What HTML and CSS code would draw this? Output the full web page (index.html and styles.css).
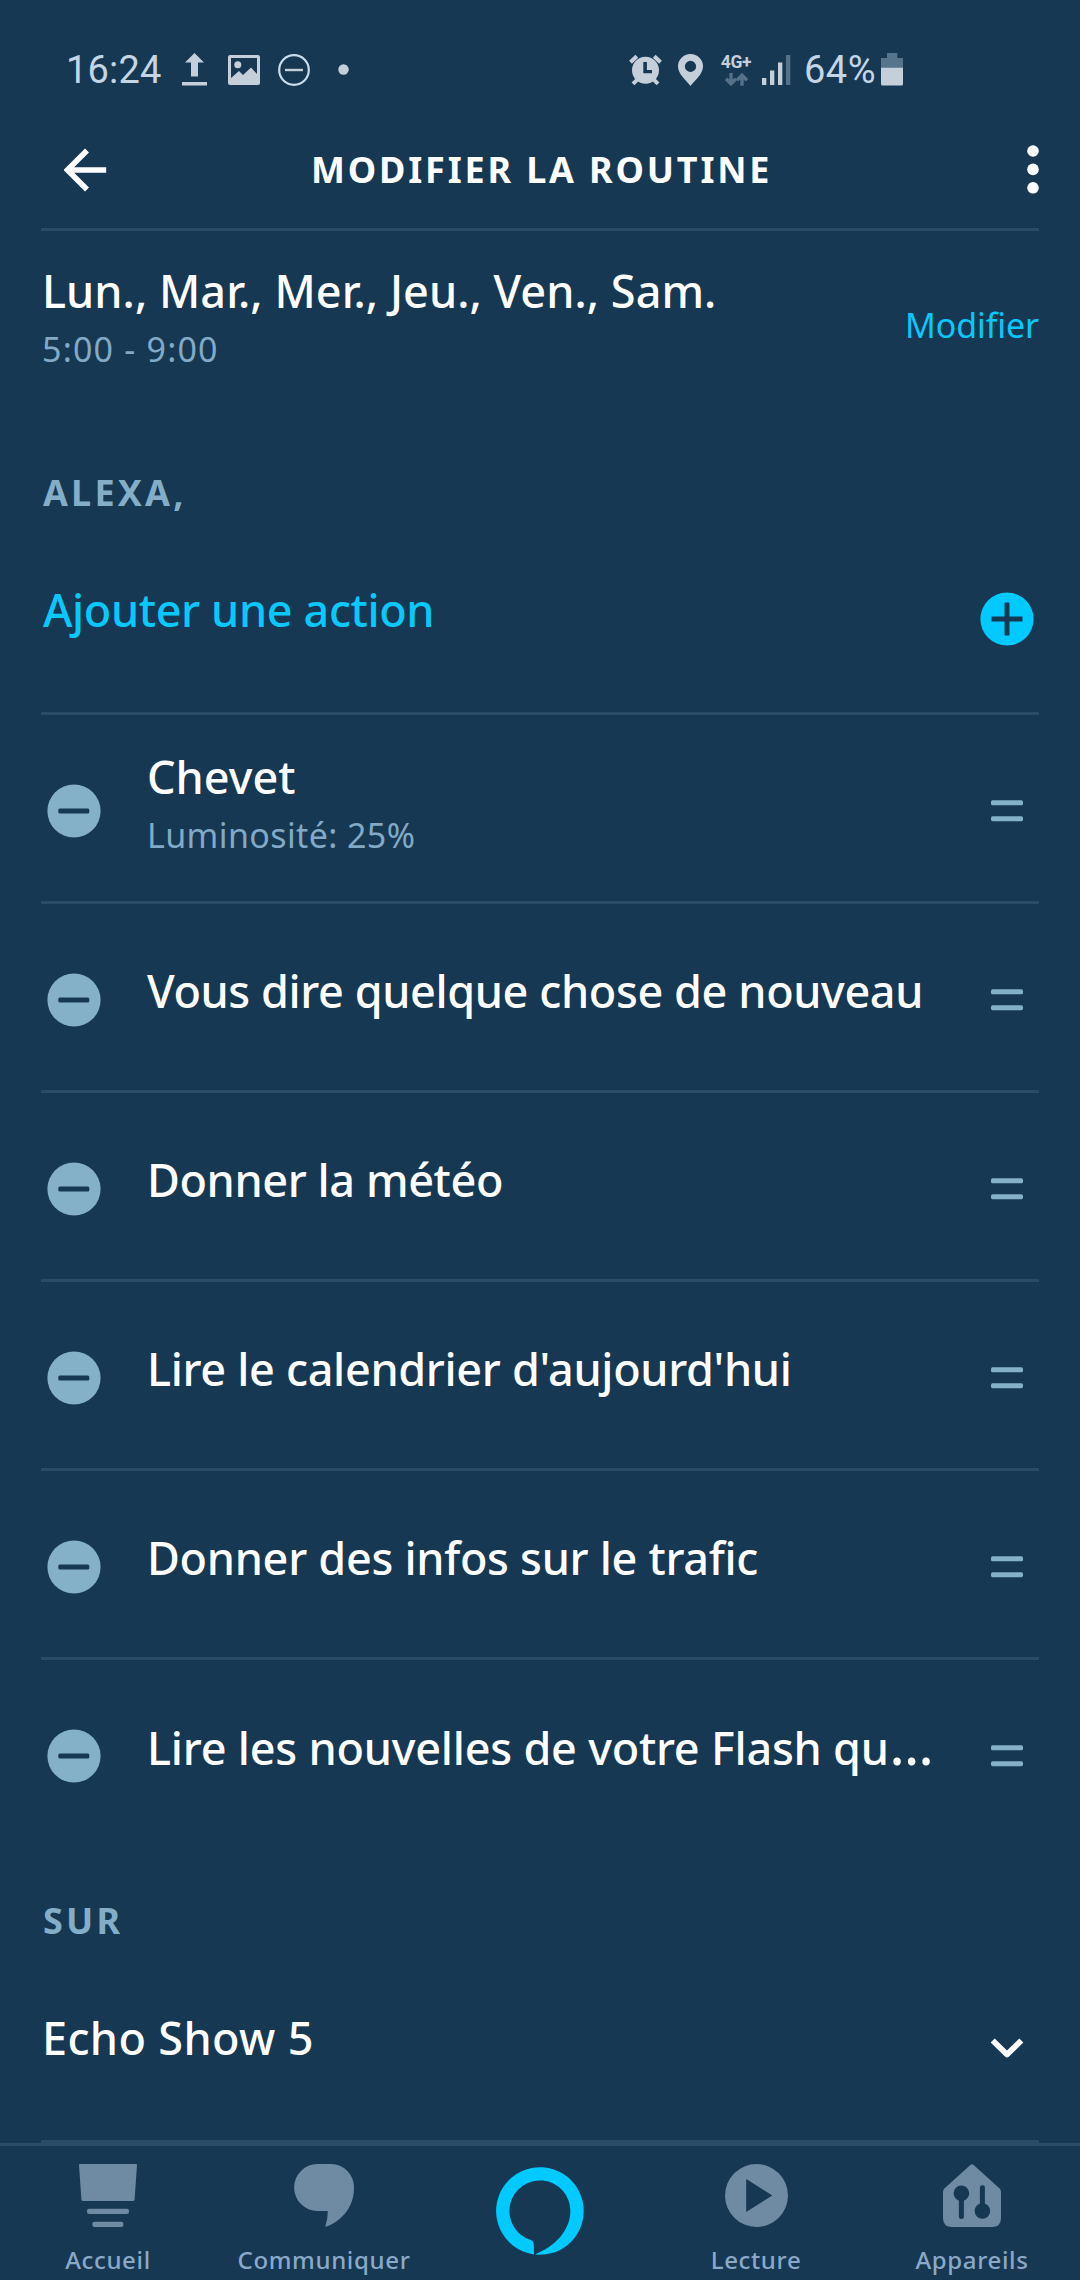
FILE: index.html
```html
<!DOCTYPE html>
<html lang="fr">
<head>
<meta charset="utf-8">
<title>Modifier la routine</title>
<link rel="stylesheet" href="styles.css">
</head>
<body>
<svg class="defs" width="0" height="0" aria-hidden="true">
  <symbol id="minus" viewBox="0 0 54 54">
    <circle cx="27" cy="27" r="26.6" fill="#84b0c8"/>
    <rect x="11.3" y="24.4" width="31" height="5.2" rx="1.5" fill="#173852"/>
  </symbol>
  <symbol id="drag" viewBox="0 0 32 22">
    <rect x="0" y="0.3" width="32" height="5" rx="1.6" fill="#84b0c8"/>
    <rect x="0" y="16.2" width="32" height="5" rx="1.6" fill="#84b0c8"/>
  </symbol>
</svg>
<div class="screen">
  <div class="status">
    <div class="status-left">
      <span class="clock">16:24</span>
      <svg class="i-upload" width="25" height="33" viewBox="0 0 25 33"><path d="M12.5 0 22 9.5H16V23.5H9V9.5H3Z M0 29h25v3.6H0Z"/></svg>
      <svg class="i-image" width="32" height="30" viewBox="0 0 32 30"><path fill-rule="evenodd" d="M2 0H30Q32 0 32 2V28Q32 30 30 30H2Q0 30 0 28V2Q0 0 2 0ZM3 3V23L11 16 15 20 23 12.5 29 19V3Z"/><circle cx="9.8" cy="9.7" r="3.5"/></svg>
      <svg class="i-dnd" width="32" height="32" viewBox="0 0 32 32"><circle cx="16" cy="16" r="14.8" fill="none" stroke="#c9dcec" stroke-width="2.2"/><path d="M7 14.8H25V17.2H7Z"/></svg>
      <svg class="i-dot" width="11" height="11" viewBox="0 0 11 11"><circle cx="5.5" cy="5.5" r="5.2"/></svg>
    </div>
    <div class="status-right">
      <svg width="33" height="32" viewBox="0 0 33 32"><path fill-rule="evenodd" d="M16.5 2.8A13.5 13.5 0 1 1 16.5 29.8 13.5 13.5 0 1 1 16.5 2.8ZM14.3 8V19.2H23V15.9H17.9V8Z"/><path d="M1.5 8.3 7.8 2.2M31.5 8.3 25.2 2.2M4 29.8 8 25.8M29 29.8 25 25.8" stroke="#c5cfda" stroke-width="4" fill="none"/></svg>
      <svg class="i-pin" width="25" height="32" viewBox="0 0 25 32"><path fill-rule="evenodd" d="M12.5 0A12.5 12.3 0 0 1 25 12.5C25 20 17 26 12.5 32 8 26 0 20 0 12.5A12.5 12.3 0 0 1 12.5 0ZM12.5 6.8A5.6 5.6 0 1 0 12.5 18 5.6 5.6 0 1 0 12.5 6.8Z"/></svg>
      <div class="net">
        <span class="net-label">4G+</span>
        <svg width="23" height="13" viewBox="0 0 23 13" fill="none"><g stroke="#56718a" stroke-width="3.4"><path d="M6 0V10.5M1 5.8 6 10.8 11 5.8"/><path d="M17 12.8V2M12 7.2 17 2.2 22 7.2"/></g></svg>
      </div>
      <svg class="i-signal" width="29" height="30" viewBox="0 0 29 30"><path d="M0 23H4.3V30H0ZM8 15.5H12.3V30H8ZM16 7.5H20.3V30H16Z"/><path d="M24 0H28.3V30H24Z" fill="#56718a"/></svg>
      <span class="percent">64%</span>
      <svg class="i-battery" width="22" height="33" viewBox="0 0 22 33"><path d="M6 0H16.3V5H22V15H0V5H6Z" fill="#56758c"/><path d="M0 14.8H22V31Q22 32.6 20.4 32.6H1.6Q0 32.6 0 31Z"/></svg>
    </div>
  </div>
  <header class="header">
    <svg class="back" width="44" height="44" viewBox="0 0 44 44"><path d="M42.2 22H4M23 2.6 3.4 22 23 41.4" fill="none" stroke="#fff" stroke-width="5.6"/></svg>
    <h1 class="title">MODIFIER LA ROUTINE</h1>
    <svg class="more" width="12" height="49" viewBox="0 0 12 49" fill="#fff"><circle cx="6" cy="6" r="5.8"/><circle cx="6" cy="24.4" r="5.8"/><circle cx="6" cy="42.8" r="5.8"/></svg>
  </header>
  <main class="content">
    <section class="schedule">
      <div>
        <div class="primary days">Lun., Mar., Mer., Jeu., Ven., Sam.</div>
        <div class="secondary hours">5:00 - 9:00</div>
      </div>
      <a class="edit">Modifier</a>
    </section>
    <h2 class="section">ALEXA,</h2>
    <div class="add">
      <span class="primary add-label">Ajouter une action</span>
      <svg class="plus" width="54" height="54" viewBox="0 0 54 54"><circle cx="27" cy="27" r="26.6" fill="#00caff"/><path d="M11.5 24.5h13v-13q0-1 1-1h3q1 0 1 1v13h13v5h-13v13q0 1-1 1h-3q-1 0-1-1v-13h-13Z" fill="#173852"/></svg>
    </div>
    <ul class="actions">
      <li class="action"><svg class="minus"><use href="#minus"/></svg><div class="text double"><div class="primary device-action">Chevet</div><div class="secondary">Luminosité: 25%</div></div><svg class="drag"><use href="#drag"/></svg></li>
      <li class="action"><svg class="minus"><use href="#minus"/></svg><div class="text primary">Vous dire quelque chose de nouveau</div><svg class="drag"><use href="#drag"/></svg></li>
      <li class="action"><svg class="minus"><use href="#minus"/></svg><div class="text primary">Donner la météo</div><svg class="drag"><use href="#drag"/></svg></li>
      <li class="action"><svg class="minus"><use href="#minus"/></svg><div class="text primary calendar">Lire le calendrier d'aujourd'hui</div><svg class="drag"><use href="#drag"/></svg></li>
      <li class="action"><svg class="minus"><use href="#minus"/></svg><div class="text primary traffic">Donner des infos sur le trafic</div><svg class="drag"><use href="#drag"/></svg></li>
      <li class="action"><svg class="minus"><use href="#minus"/></svg><div class="text primary news">Lire les nouvelles de votre Flash qu<span class="ellipsis">…</span></div><svg class="drag"><use href="#drag"/></svg></li>
    </ul>
    <h2 class="section device-heading">SUR</h2>
    <div class="device">
      <span class="primary device-name">Echo Show 5</span>
      <svg class="chevron" width="34" height="20" viewBox="0 0 34 20"><path d="M2.7 2.5 17 16.5 31.3 2.5" fill="none" stroke="#fff" stroke-width="5.8" stroke-linejoin="round"/></svg>
    </div>
  </main>
  <nav class="nav">
    <a class="tab"><svg width="58" height="63" viewBox="0 0 58 63"><path d="M1 0H57Q58 0 58 1L55.6 35.5Q55.4 37 54 37H4Q2.6 37 2.4 35.5L0 1Q0 0 1 0Z"/><rect x="8" y="44.7" width="42" height="5.2" rx="2"/><rect x="13.4" y="57.7" width="31" height="5.2" rx="2"/></svg><span>Accueil</span></a>
    <a class="tab"><svg width="60" height="63" viewBox="0 0 60 63"><path d="M23.5 0H37A22.8 23.5 0 0 1 60 24C60 41 50 56 32 62.8Q31 62.6 31.5 61.4Q33.8 55 33.8 47H23.5A23.4 23.5 0 0 1 23.5 0Z"/></svg><span>Communiquer</span></a>
    <a class="tab alexa"><svg width="88" height="88" viewBox="0 0 88 88"><path fill="#00caff" fill-rule="evenodd" d="M38 87.4A43.8 43.8 0 1 1 44 87.8Q41 87.8 39.2 87.2C58 80.2 74.4 64 74.4 43.8A30.5 30.5 0 1 0 34.2 72.8Q37.8 73.8 37.8 77.6Z"/></svg></a>
    <a class="tab"><svg width="63" height="63" viewBox="0 0 63 63"><path fill-rule="evenodd" d="M31.5 0A31.5 31.5 0 1 1 31.5 63 31.5 31.5 0 1 1 31.5 0ZM21.2 15V48L47.3 31.5Z"/></svg><span>Lecture</span></a>
    <a class="tab house"><svg width="58" height="63" viewBox="0 0 58 63"><path d="M27.6 0.8Q29 -0.4 30.4 0.8L56.6 24.6Q58 26 58 28V54Q58 63 49 63H9Q0 63 0 54V28Q0 26 1.4 24.6Z"/><g fill="#173852"><circle cx="18.4" cy="29.2" r="7.8"/><rect x="15.9" y="30" width="5" height="25" rx="2.2"/><circle cx="39.4" cy="47" r="7.8"/><rect x="36.9" y="21.2" width="5" height="26" rx="2.2"/></g></svg><span>Appareils</span></a>
  </nav>
</div>
</body>
</html>
```
FILE: styles.css
```css
* { box-sizing: border-box; }
body { margin: 0; background: #173852; font-family: "Noto Sans", "Open Sans", sans-serif; color: #fff; }
.defs { display: block; }
.screen { width: 1080px; height: 2280px; display: flex; flex-direction: column; overflow: hidden; }
h1, h2, ul { margin: 0; padding: 0; }
svg { display: block; flex: none; }

.status { height: 98px; padding: 42px 177px 0 66px; display: flex; justify-content: space-between; fill: #c5cfda; color: #c4d6e6; font-family: Roboto, "Open Sans", sans-serif; }
.status-left, .status-right { display: flex; align-items: center; height: 56px; }
.clock { font-size: 38px; letter-spacing: .2px; line-height: 58px; width: 116px; font-weight: 400; }
.percent { font-size: 38px; letter-spacing: .5px; line-height: 58px; width: 77px; margin-left: 13px; }
.i-upload, .i-image, .i-dnd, .i-dot { margin-top: -1px; }
.i-image { margin-left: 21px; }
.i-dnd { margin-left: 18px; }
.i-dot { margin-left: 28px; }
.i-pin { margin-left: 16px; }
.net { width: 32px; height: 32px; margin-left: 17px; display: flex; flex-direction: column; justify-content: space-between; align-items: center; }
.net-label { font-size: 17.5px; line-height: 16px; font-weight: 700; color: #c5cfda; letter-spacing: -.3px; }
.i-signal { margin-left: 10px; }
.i-battery { margin-top: -2px; }

.header { height: 130px; padding: 13px 41px 0 64px; display: flex; align-items: center; }
.title { margin-left: 203px; font-size: 36px; line-height: 50px; font-weight: 700; letter-spacing: 2.83px; }
.more { margin: 0 0 0 auto; }

.content { margin: 0 41px; border-top: 3px solid #2b4b66; border-bottom: 3px solid #2b4b66; height: 1915px; }
.primary { font-size: 45px; line-height: 60px; font-weight: 500; letter-spacing: -.4px; white-space: nowrap; }
.secondary { font-size: 34px; line-height: 56px; font-weight: 450; color: #82aac6; letter-spacing: .38px; }
.schedule { height: 236px; padding: 30px 0 0 1px; display: flex; justify-content: space-between; }
.days { letter-spacing: .05px; }
.hours { letter-spacing: 1.2px; }
.edit { margin-top: 36px; font-size: 34px; line-height: 56px; font-weight: 450; letter-spacing: -.1px; color: #08c8fc; }
.section { height: 50px; font-size: 36px; line-height: 52px; font-weight: 700; letter-spacing: 3.2px; color: #84aec8; padding-left: 2px; }
.add { height: 195px; padding: 8px 5px 0 2px; display: flex; align-items: center; justify-content: space-between; }
.add-label { color: #08c8fc; padding-bottom: 17px; letter-spacing: -.38px; }

.actions { list-style: none; }
.action { height: 189px; border-top: 3px solid #2b4b66; padding: 5px 16px 0 5px; display: flex; align-items: center; }
.minus { width: 54px; height: 54px; margin-left: .5px; }
.text { flex: 1; padding-bottom: 17px; margin-left: 46.5px; }
.double { padding-bottom: 12px; }
.device-action { letter-spacing: 0; }
.calendar { letter-spacing: -.33px; }
.traffic { letter-spacing: -.3px; }
.news { letter-spacing: -.22px; padding-bottom: 16px; }
.ellipsis { font-size: 54px; line-height: 0; margin-left: 1px; }
.drag { width: 32px; height: 22px; }

.device-heading { margin-top: 49px; }
.device { height: 195px; padding: 10px 15px 0 1px; display: flex; align-items: center; justify-content: space-between; }
.device-name { padding-bottom: 20px; letter-spacing: .35px; }

.nav { height: 137px; border-top: 3px solid #2b4b66; display: grid; grid-template-columns: repeat(5, 216px); fill: #6f8aa3; }
.tab { display: flex; flex-direction: column; align-items: center; padding-top: 18px; }
.tab span { margin-top: 18px; font-size: 24px; line-height: 30px; font-weight: 500; letter-spacing: .65px; color: #8aa9c8; }
.alexa { padding-top: 21px; }
```
